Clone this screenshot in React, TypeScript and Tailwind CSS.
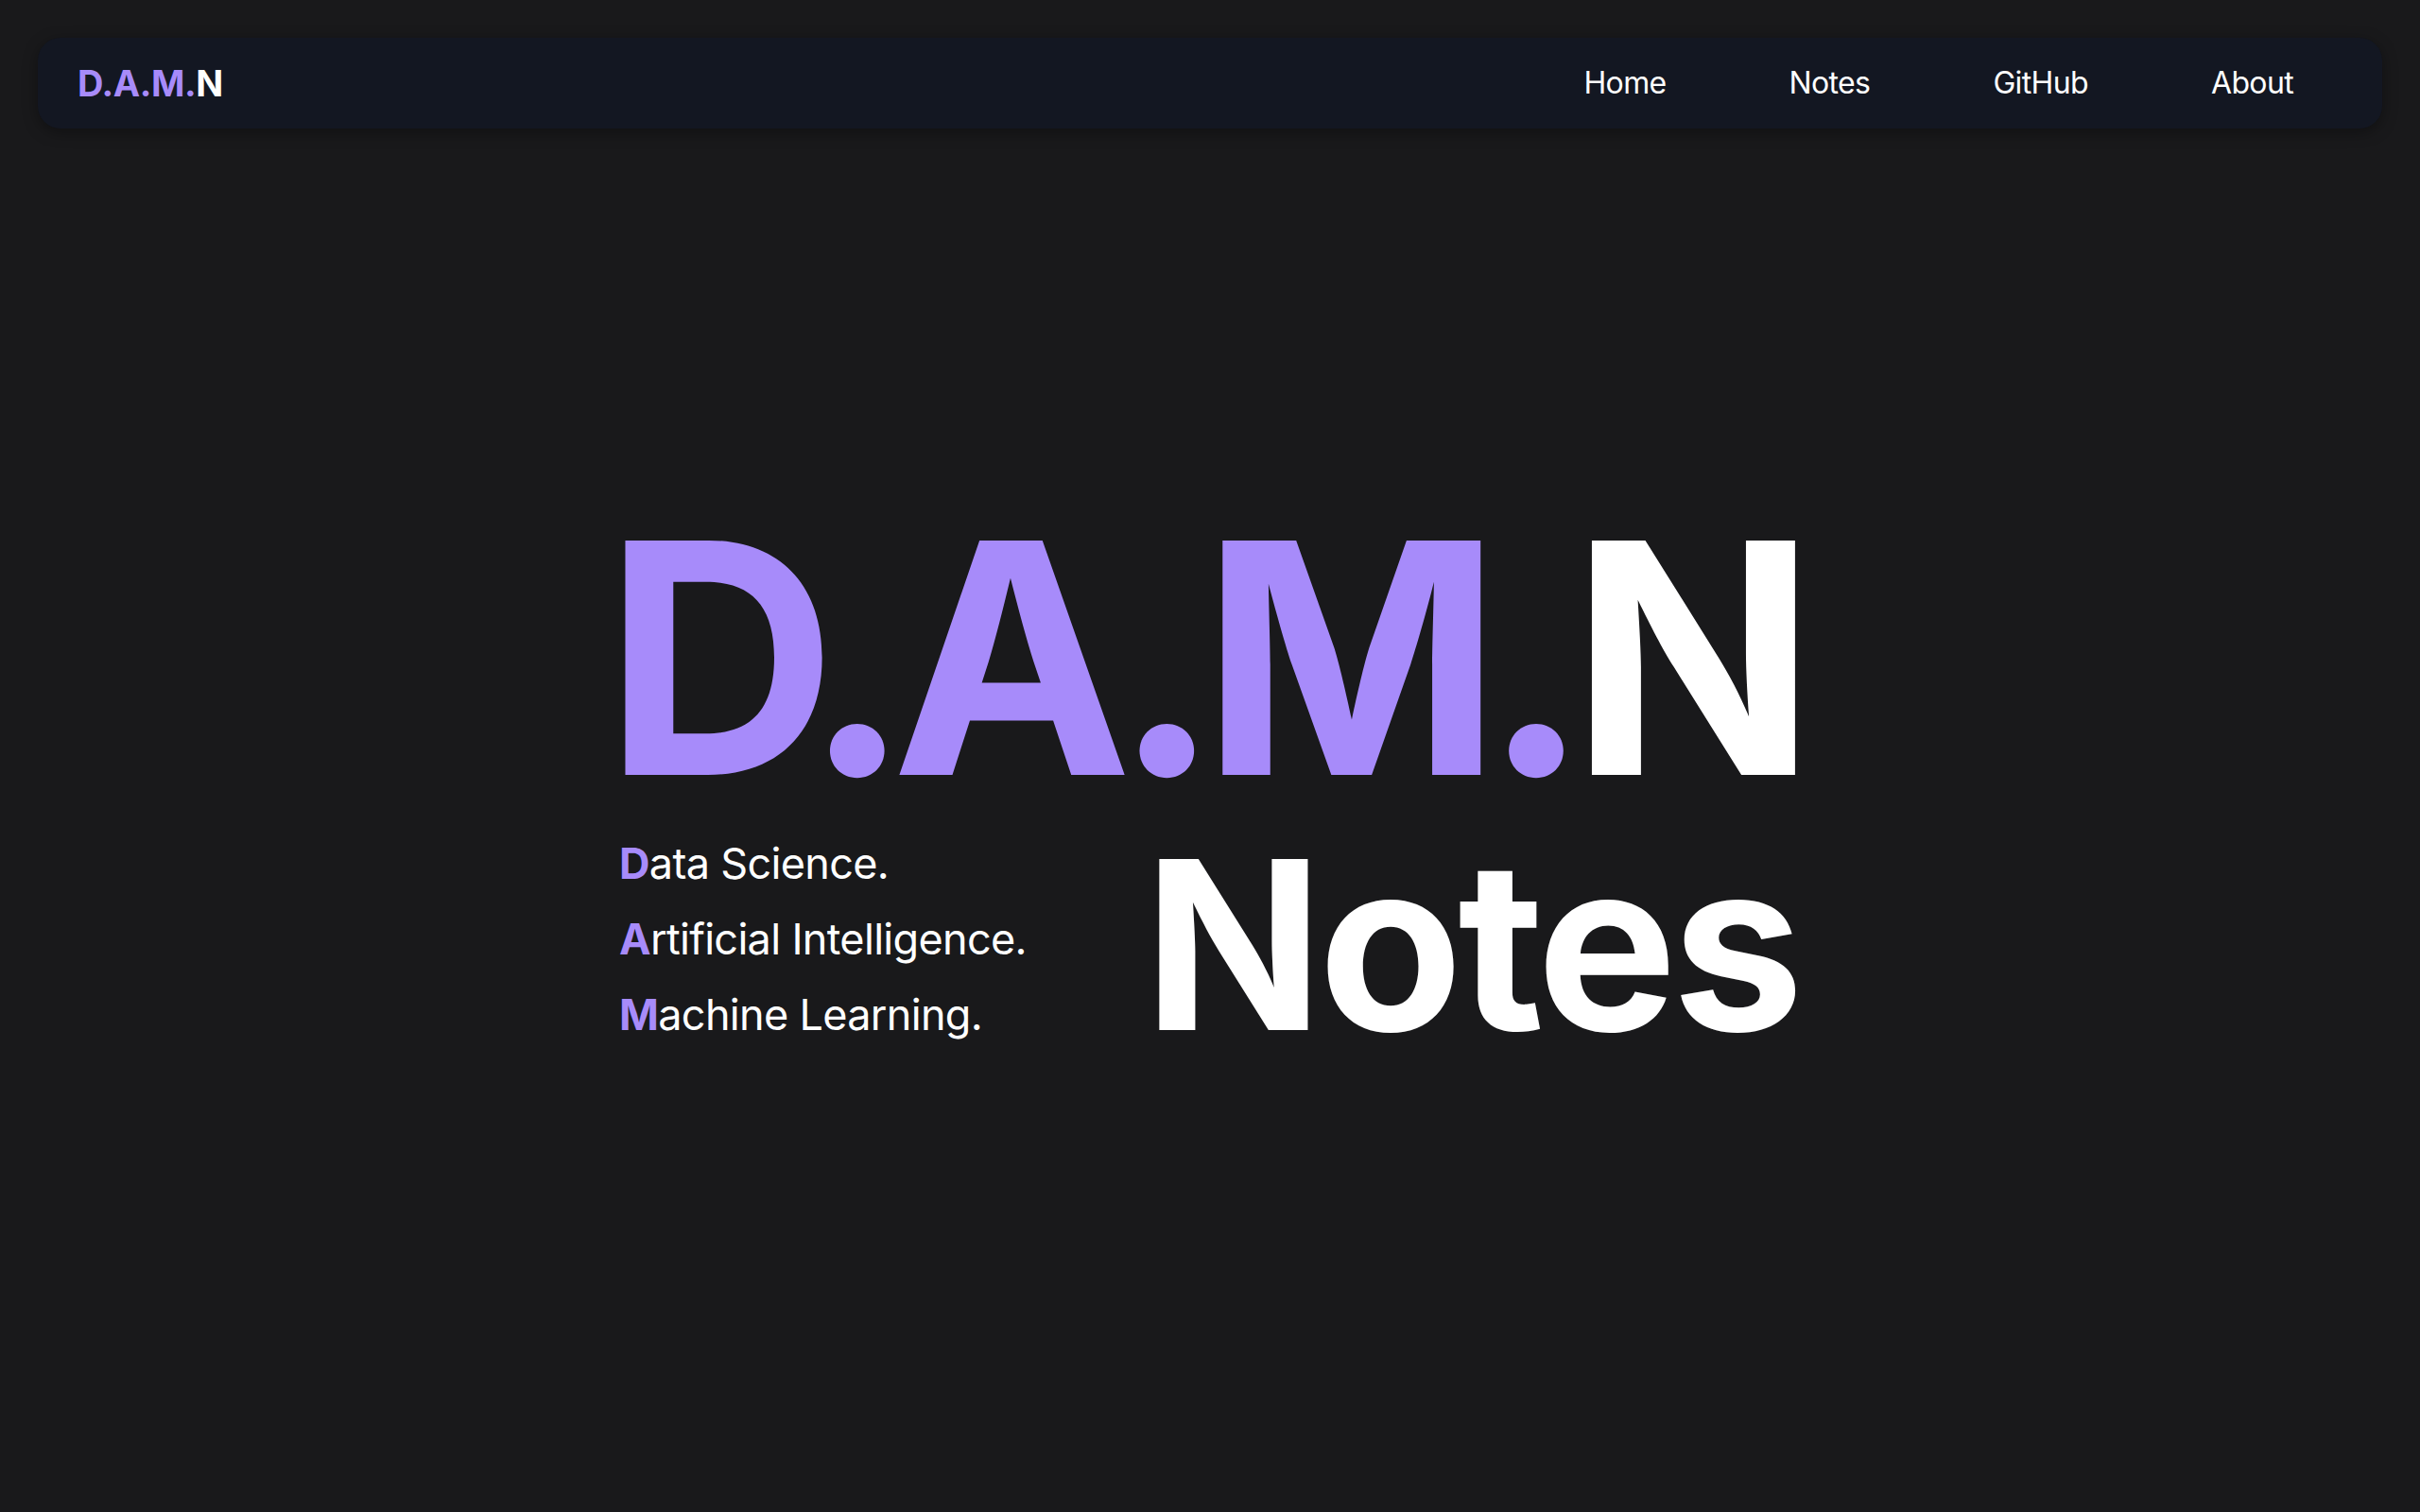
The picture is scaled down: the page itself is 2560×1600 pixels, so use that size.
import React from 'react'

const links = ['Home', 'Notes', 'GitHub', 'About']

const lines = [
  { first: 'D', rest: 'ata Science.' },
  { first: 'A', rest: 'rtificial Intelligence.' },
  { first: 'M', rest: 'achine Learning.' },
]

const App = () => {
  return (
    <div className="min-h-screen w-full bg-[#19191b] text-white font-['Inter','Noto_Sans',sans-serif]">

      <div className="px-[40px] pt-[40px]">
        <nav className="flex items-center justify-between h-[96px] rounded-[24px] bg-[#131722] shadow-[0_4px_16px_rgba(0,0,0,0.35)] pl-[42px] pr-[94px]">
          <a href="#" className="text-[38px] font-bold tracking-[-0.01em] leading-none">
            <span className="text-[#a78bfa]">D.A.M.</span>N
          </a>
          <ul className="flex items-center gap-[130px]">
            {links.map((l) => (
              <li key={l}>
                <a href="#" className="text-[32px] leading-none tracking-[-0.02em]">{l}</a>
              </li>
            ))}
          </ul>
        </nav>
      </div>

      <main className="flex justify-center pt-[390px]">
        <div className="flex flex-col w-[1246px]">
          <h1 className="text-[341px] font-bold leading-none tracking-[-0.06em] whitespace-nowrap -ml-[18px]">
            <span className="text-[#a78bfa]">D.A.M.</span>N
          </h1>
          <div className="flex items-end justify-between mt-[7px]">
            <div className="flex flex-col mb-[10px] -ml-[2px]">
              {lines.map((l) => (
                <p key={l.first} className="text-[45px] leading-[80px] tracking-[-0.015em]">
                  <span className="font-bold text-[#a78bfa]">{l.first}</span>{l.rest}
                </p>
              ))}
            </div>
            <h2 className="text-[249px] font-bold leading-none tracking-[-0.021em]">Notes</h2>
          </div>
        </div>
      </main>
    </div>
  )
}

export default App
